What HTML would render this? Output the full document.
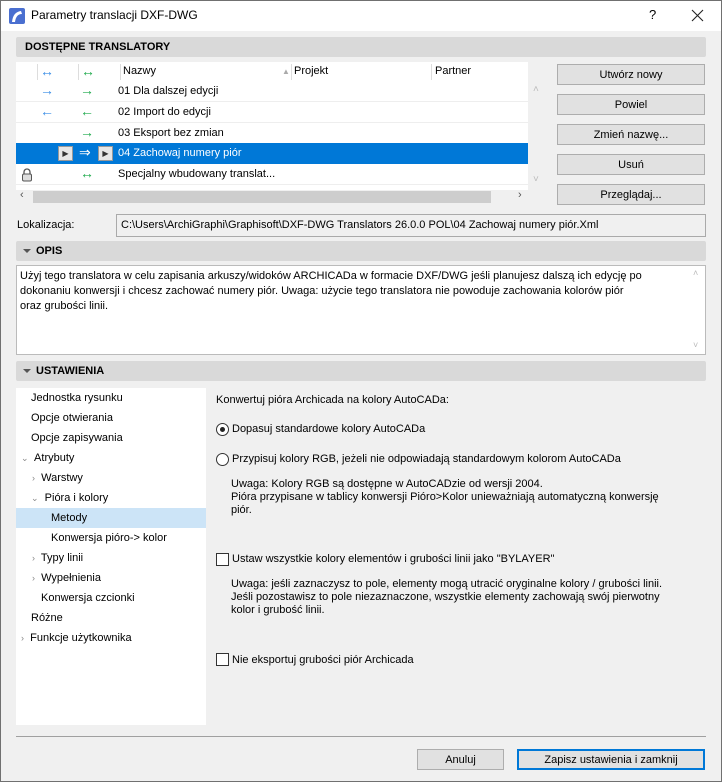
<!DOCTYPE html>
<html><head><meta charset="utf-8"><style>
*{box-sizing:border-box;margin:0;padding:0}
body{width:722px;height:782px;background:#f0f0f0;font-family:"Liberation Sans",sans-serif;font-size:11px;color:#000;position:relative;overflow:hidden}
.a{position:absolute;white-space:nowrap}
.win{position:absolute;left:0;top:0;width:722px;height:782px;border:1px solid #707070}
.hdr{position:absolute;left:16px;width:690px;height:20px;background:#d9d9d9;border-radius:2px;font-weight:bold;font-size:11px;line-height:20px;padding-left:20px}
.tri{position:absolute;left:7px;top:8px;width:0;height:0;border-left:4px solid transparent;border-right:4px solid transparent;border-top:4px solid #555}
.btn{position:absolute;background:#e1e1e1;border:1px solid #adadad;text-align:center;line-height:20px}
.row{position:absolute;left:16px;width:512px;height:21px;border-bottom:1px solid #eee;line-height:21px}
.bl{color:#3a8ee6;font-size:14px;line-height:19px}.gr{color:#1faa4c;font-size:14px;line-height:19px}
.t{position:absolute;left:16px;width:190px;height:20px;line-height:20px}
.chev{color:#888;font-size:9px}
</style></head><body>
<div class="win"></div>
<div class="a" style="left:1px;top:1px;width:720px;height:30px;background:#fff"></div>
<svg class="a" style="left:9px;top:8px" width="16" height="16"><rect width="16" height="16" rx="2" fill="#4a6fd0"/><path d="M3 14 Q4 4 12 3 L13 6 Q7 6 6 14Z" fill="#fff"/></svg>
<div class="a" style="left:31px;top:8px;font-size:12px">Parametry translacji DXF-DWG</div>
<div class="a" style="left:649px;top:7px;font-size:13px">?</div>
<svg class="a" style="left:691px;top:9px" width="13" height="13"><path d="M1 1L12 12M12 1L1 12" stroke="#222" stroke-width="1.1"/></svg>

<div class="hdr" style="top:37px;padding-left:9px">DOSTĘPNE TRANSLATORY</div>
<div class="a" style="left:16px;top:62px;width:512px;height:128px;background:#fff"></div>
<div class="a" style="left:16px;top:62px;width:512px;height:19px;line-height:19px">
 <span class="a bl" style="left:24px">↔</span><span class="a" style="top:2px;width:1px;height:16px;background:#ddd;left:21px"></span>
 <span class="a gr" style="left:65px">↔</span><span class="a" style="left:62px;top:2px;width:1px;height:16px;background:#ddd"></span>
 <span class="a" style="left:104px;top:2px;width:1px;height:16px;background:#ddd"></span>
 <span class="a" style="left:107px">Nazwy</span><span class="a" style="left:266px;color:#aaa;font-size:8px">▲</span>
 <span class="a" style="left:275px;top:2px;width:1px;height:16px;background:#ddd"></span><span class="a" style="left:278px">Projekt</span>
 <span class="a" style="left:415px;top:2px;width:1px;height:16px;background:#ddd"></span><span class="a" style="left:419px">Partner</span>
</div>
<div class="row" style="top:81px"><span class="a bl" style="left:24px">→</span><span class="a gr" style="left:64px">→</span><span class="a" style="left:102px">01 Dla dalszej edycji</span></div>
<div class="row" style="top:102px"><span class="a bl" style="left:24px">←</span><span class="a gr" style="left:64px">←</span><span class="a" style="left:102px">02 Import do edycji</span></div>
<div class="row" style="top:123px"><span class="a gr" style="left:64px">→</span><span class="a" style="left:102px">03 Eksport bez zmian</span></div>
<div class="row" style="top:143px;background:#0078d7;color:#fff;border:none;height:21px"><span class="a" style="left:42px;top:3px;width:15px;height:15px;background:#e6e6e6;border:1px solid #999;color:#333;font-size:8px;line-height:13px;text-align:center">▶</span><span class="a" style="left:63px;font-size:14px;line-height:19px">⇒</span><span class="a" style="left:82px;top:3px;width:15px;height:15px;background:#e6e6e6;border:1px solid #999;color:#333;font-size:8px;line-height:13px;text-align:center">▶</span><span class="a" style="left:102px">04 Zachowaj numery piór</span></div>
<div class="row" style="top:164px"><svg class="a" style="left:5px;top:4px" width="12" height="14"><path d="M3 6V4a3 3 0 0 1 6 0v2" stroke="#555" fill="none" stroke-width="1.3"/><rect x="1.5" y="6" width="9" height="7" rx="1.5" fill="#ddd" stroke="#555"/></svg><span class="a gr" style="left:64px">↔</span><span class="a" style="left:102px">Specjalny wbudowany translat...</span></div>
<div class="a" style="left:16px;top:190px;width:512px;height:14px;background:#f0f0f0"></div>
<div class="a" style="left:33px;top:191px;width:458px;height:12px;background:#cdcdcd"></div>
<div class="a" style="left:20px;top:189px;color:#555">‹</div><div class="a" style="left:518px;top:189px;color:#555">›</div>
<div class="a" style="left:533px;top:84px;color:#bbb;font-size:10px">˄</div>
<div class="a" style="left:533px;top:174px;color:#bbb;font-size:10px">˅</div>
<div class="btn" style="left:557px;top:64px;width:148px;height:21px">Utwórz nowy</div>
<div class="btn" style="left:557px;top:94px;width:148px;height:21px">Powiel</div>
<div class="btn" style="left:557px;top:124px;width:148px;height:21px">Zmień nazwę...</div>
<div class="btn" style="left:557px;top:154px;width:148px;height:21px">Usuń</div>
<div class="btn" style="left:557px;top:184px;width:148px;height:21px">Przeglądaj...</div>
<div class="a" style="left:17px;top:219px">Lokalizacja:</div>
<div class="a" style="left:116px;top:214px;width:590px;height:23px;border:1px solid #aaa;background:#f0f0f0;padding-left:4px;line-height:21px">C:\Users\ArchiGraphi\Graphisoft\DXF-DWG Translators 26.0.0 POL\04 Zachowaj numery piór.Xml</div>

<div class="hdr" style="top:241px"><span class="tri"></span>OPIS</div>
<div class="a" style="left:16px;top:265px;width:690px;height:90px;background:#fff;border:1px solid #bbb;padding:3px 6px 0 3px;line-height:15px">Użyj tego translatora w celu zapisania arkuszy/widoków ARCHICADa w formacie DXF/DWG jeśli planujesz dalszą ich edycję po<br>dokonaniu konwersji i chcesz zachować numery piór. Uwaga: użycie tego translatora nie powoduje zachowania kolorów piór<br>oraz grubości linii.</div>
<div class="a" style="left:693px;top:268px;color:#bbb;font-size:9px">˄</div><div class="a" style="left:693px;top:340px;color:#bbb;font-size:9px">˅</div>

<div class="hdr" style="top:361px"><span class="tri"></span>USTAWIENIA</div>
<div class="a" style="left:16px;top:388px;width:190px;height:337px;background:#fff"></div>
<div class="t" style="top:388px;padding-left:15px">Jednostka rysunku</div>
<div class="t" style="top:408px;padding-left:15px">Opcje otwierania</div>
<div class="t" style="top:428px;padding-left:15px">Opcje zapisywania</div>
<div class="t" style="top:448px;padding-left:5px"><span class="chev">⌄</span>&nbsp; Atrybuty</div>
<div class="t" style="top:468px;padding-left:16px"><span class="chev">›</span>&nbsp; Warstwy</div>
<div class="t" style="top:488px;padding-left:15px"><span class="chev">⌄</span>&nbsp; Pióra i kolory</div>
<div class="t" style="top:508px;padding-left:35px;background:#cce4f7">Metody</div>
<div class="t" style="top:528px;padding-left:35px">Konwersja pióro-&gt; kolor</div>
<div class="t" style="top:548px;padding-left:16px"><span class="chev">›</span>&nbsp; Typy linii</div>
<div class="t" style="top:568px;padding-left:16px"><span class="chev">›</span>&nbsp; Wypełnienia</div>
<div class="t" style="top:588px;padding-left:25px">Konwersja czcionki</div>
<div class="t" style="top:608px;padding-left:15px">Różne</div>
<div class="t" style="top:628px;padding-left:5px"><span class="chev">›</span>&nbsp; Funkcje użytkownika</div>

<div class="a" style="left:216px;top:394px">Konwertuj pióra Archicada na kolory AutoCADa:</div>
<div class="a" style="left:216px;top:423px;width:13px;height:13px;border:1px solid #333;border-radius:50%;background:#fff"><div class="a" style="left:3px;top:3px;width:5px;height:5px;border-radius:50%;background:#222"></div></div>
<div class="a" style="left:232px;top:423px">Dopasuj standardowe kolory AutoCADa</div>
<div class="a" style="left:216px;top:453px;width:13px;height:13px;border:1px solid #333;border-radius:50%;background:#fff"></div>
<div class="a" style="left:232px;top:453px">Przypisuj kolory RGB, jeżeli nie odpowiadają standardowym kolorom AutoCADa</div>
<div class="a" style="left:231px;top:478px;line-height:13px">Uwaga: Kolory RGB są dostępne w AutoCADzie od wersji 2004.<br>Pióra przypisane w tablicy konwersji Pióro&gt;Kolor unieważniają automatyczną konwersję<br>piór.</div>
<div class="a" style="left:216px;top:553px;width:13px;height:13px;border:1px solid #333;background:#fff"></div>
<div class="a" style="left:232px;top:553px">Ustaw wszystkie kolory elementów i grubości linii jako "BYLAYER"</div>
<div class="a" style="left:231px;top:578px;line-height:13px">Uwaga: jeśli zaznaczysz to pole, elementy mogą utracić oryginalne kolory / grubości linii.<br>Jeśli pozostawisz to pole niezaznaczone, wszystkie elementy zachowają swój pierwotny<br>kolor i grubość linii.</div>
<div class="a" style="left:216px;top:653px;width:13px;height:13px;border:1px solid #333;background:#fff"></div>
<div class="a" style="left:232px;top:654px">Nie eksportuj grubości piór Archicada</div>

<div class="a" style="left:16px;top:736px;width:690px;height:1px;background:#a0a0a0"></div>
<div class="btn" style="left:417px;top:749px;width:87px;height:21px">Anuluj</div>
<div class="btn" style="left:517px;top:749px;width:188px;height:21px;border:2px solid #0078d7;line-height:18px">Zapisz ustawienia i zamknij</div>
</body></html>
